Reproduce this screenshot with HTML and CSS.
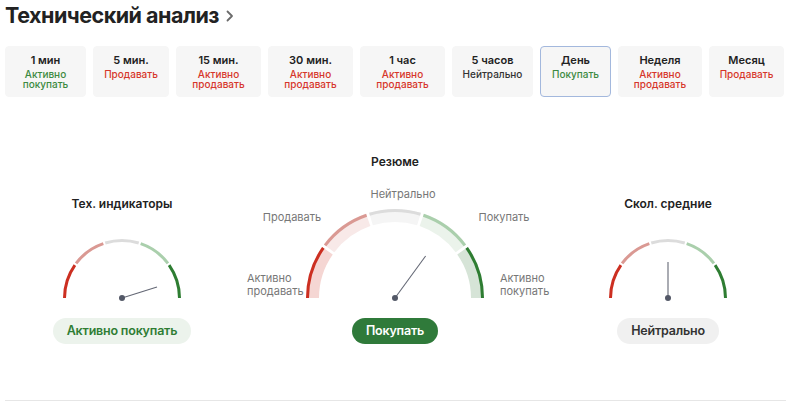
FILE: index.html
```html
<!DOCTYPE html>
<html lang="ru">
<head>
<meta charset="utf-8">
<title>Технический анализ</title>
<link rel="stylesheet" href="styles.css">
</head>
<body>
<div class="page">
  <h1 class="title">Технический анализ<svg class="chev" width="8" height="12" viewBox="0 0 8 12"><polyline points="1.5,1.5 6,6 1.5,10.5" fill="none" stroke="#6b6b6b" stroke-width="1.8" stroke-linecap="round" stroke-linejoin="round"/></svg></h1>

  <div class="tiles">
    <div class="tile"><div class="tf">1 мин</div><div class="ts buy">Активно покупать</div></div>
    <div class="tile"><div class="tf">5 мин.</div><div class="ts sell">Продавать</div></div>
    <div class="tile"><div class="tf">15 мин.</div><div class="ts sell">Активно продавать</div></div>
    <div class="tile"><div class="tf">30 мин.</div><div class="ts sell">Активно продавать</div></div>
    <div class="tile"><div class="tf">1 час</div><div class="ts sell">Активно продавать</div></div>
    <div class="tile"><div class="tf">5 часов</div><div class="ts neutral">Нейтрально</div></div>
    <div class="tile selected"><div class="tf">День</div><div class="ts buy">Покупать</div></div>
    <div class="tile"><div class="tf">Неделя</div><div class="ts sell">Активно продавать</div></div>
    <div class="tile"><div class="tf">Месяц</div><div class="ts sell">Продавать</div></div>
  </div>

  <div class="gauges">
    <div class="gcol">
      <div class="gtitle">Тех. индикаторы</div>
      <svg class="gsmall" width="130" height="64" viewBox="0 0 130 64">
        <path class="arc s1" d="M 7.5 60 A 57.5 57.5 0 0 1 122.5 60" pathLength="180" stroke-dasharray="35 999"/>
        <path class="arc s2" d="M 7.5 60 A 57.5 57.5 0 0 1 122.5 60" pathLength="180" stroke-dasharray="0 37 34 999"/>
        <path class="arc s3" d="M 7.5 60 A 57.5 57.5 0 0 1 122.5 60" pathLength="180" stroke-dasharray="0 73 34 999"/>
        <path class="arc s4" d="M 7.5 60 A 57.5 57.5 0 0 1 122.5 60" pathLength="180" stroke-dasharray="0 109 34 999"/>
        <path class="arc s5" d="M 7.5 60 A 57.5 57.5 0 0 1 122.5 60" pathLength="180" stroke-dasharray="0 145 35 999"/>
        <line class="needle" x1="65" y1="60" x2="100" y2="49"/>
        <circle class="pivot" cx="65" cy="60" r="3"/>
      </svg>
      <div class="pill pill-buy">Активно покупать</div>
    </div>

    <div class="gcol">
      <div class="gtitle">Резюме</div>
      <svg class="gbig" width="346" height="122" viewBox="0 0 346 122">
        <path class="band b1" d="M 90.5 118 A 82.5 82.5 0 0 1 255.5 118" pathLength="180" stroke-dasharray="35 999"/>
        <path class="band b2" d="M 90.5 118 A 82.5 82.5 0 0 1 255.5 118" pathLength="180" stroke-dasharray="0 37 34 999"/>
        <path class="band b3" d="M 90.5 118 A 82.5 82.5 0 0 1 255.5 118" pathLength="180" stroke-dasharray="0 73 34 999"/>
        <path class="band b4" d="M 90.5 118 A 82.5 82.5 0 0 1 255.5 118" pathLength="180" stroke-dasharray="0 109 34 999"/>
        <path class="band b5" d="M 90.5 118 A 82.5 82.5 0 0 1 255.5 118" pathLength="180" stroke-dasharray="0 145 35 999"/>
        <path class="arc s1" d="M 85.5 118 A 87.5 87.5 0 0 1 260.5 118" pathLength="180" stroke-dasharray="35 999"/>
        <path class="arc s2" d="M 85.5 118 A 87.5 87.5 0 0 1 260.5 118" pathLength="180" stroke-dasharray="0 37 34 999"/>
        <path class="arc s3" d="M 85.5 118 A 87.5 87.5 0 0 1 260.5 118" pathLength="180" stroke-dasharray="0 73 34 999"/>
        <path class="arc s4" d="M 85.5 118 A 87.5 87.5 0 0 1 260.5 118" pathLength="180" stroke-dasharray="0 109 34 999"/>
        <path class="arc s5" d="M 85.5 118 A 87.5 87.5 0 0 1 260.5 118" pathLength="180" stroke-dasharray="0 145 35 999"/>
        <text class="glabel" x="181" y="18" text-anchor="middle">Нейтрально</text>
        <text class="glabel" x="70" y="41" text-anchor="middle">Продавать</text>
        <text class="glabel" x="282" y="41" text-anchor="middle">Покупать</text>
        <text class="glabel" x="25" y="102">Активно</text>
        <text class="glabel" x="25" y="115">продавать</text>
        <text class="glabel" x="278" y="102">Активно</text>
        <text class="glabel" x="278" y="115">покупать</text>
        <line class="needle" x1="173" y1="118" x2="203.6" y2="76"/>
        <circle class="pivot" cx="173" cy="118" r="3"/>
      </svg>
      <div class="pill pill-solid">Покупать</div>
    </div>

    <div class="gcol">
      <div class="gtitle">Скол. средние</div>
      <svg class="gsmall" width="130" height="64" viewBox="0 0 130 64">
        <path class="arc s1" d="M 7.5 60 A 57.5 57.5 0 0 1 122.5 60" pathLength="180" stroke-dasharray="35 999"/>
        <path class="arc s2" d="M 7.5 60 A 57.5 57.5 0 0 1 122.5 60" pathLength="180" stroke-dasharray="0 37 34 999"/>
        <path class="arc s3" d="M 7.5 60 A 57.5 57.5 0 0 1 122.5 60" pathLength="180" stroke-dasharray="0 73 34 999"/>
        <path class="arc s4" d="M 7.5 60 A 57.5 57.5 0 0 1 122.5 60" pathLength="180" stroke-dasharray="0 109 34 999"/>
        <path class="arc s5" d="M 7.5 60 A 57.5 57.5 0 0 1 122.5 60" pathLength="180" stroke-dasharray="0 145 35 999"/>
        <line class="needle" x1="65" y1="60" x2="65" y2="24"/>
        <circle class="pivot" cx="65" cy="60" r="3"/>
      </svg>
      <div class="pill pill-neutral">Нейтрально</div>
    </div>
  </div>

  <div class="rule"></div>
</div>
</body>
</html>
```

FILE: styles.css
```css
* { box-sizing: border-box; }

html, body {
  margin: 0;
  padding: 0;
  background: #ffffff;
}

body {
  font-family: Inter, "Noto Sans", "DejaVu Sans", sans-serif;
  color: #1f1f1f;
}

.page {
  width: 800px;
  padding: 1px 15px 0 5px;
}

.title {
  margin: 0;
  font-size: 21.5px;
  line-height: 28px;
  font-weight: 700;
  color: #222222;
  letter-spacing: -0.5px;
  display: flex;
  align-items: center;
  gap: 7px;
}

.chev {
  display: block;
  margin-top: 1px;
}

.tiles {
  margin-top: 17px;
  display: grid;
  grid-template-columns: 81px 76px 85px 85px 85px 81px 71px 84px 75px;
  column-gap: 7px;
}

.tile {
  height: 51px;
  background: #f6f6f6;
  border: 1px solid #f6f6f6;
  border-radius: 4px;
  padding: 6px 6px 0;
  text-align: center;
}

.tile.selected {
  border-color: #a3b8dd;
}

.tf {
  font-size: 11px;
  line-height: 14px;
  font-weight: 600;
  color: #222222;
}

.ts {
  margin-top: 2px;
  font-size: 10px;
  line-height: 10px;
  font-weight: 500;
}

.buy { color: #3c8a41; }
.sell { color: #d6362b; }
.neutral { color: #333333; }

.gauges {
  margin-top: 57px;
  display: grid;
  grid-template-columns: 200px 346px 200px;
  justify-content: center;
  align-items: end;
}

.gcol {
  display: flex;
  flex-direction: column;
  align-items: center;
}

.gtitle {
  font-size: 12px;
  line-height: 16px;
  font-weight: 600;
  color: #222222;
}

.gsmall {
  display: block;
  margin-top: 26px;
}

.gbig {
  display: block;
  margin-top: 10px;
}

.arc, .band {
  fill: none;
  stroke-linecap: butt;
}

.arc { stroke-width: 3; }
.band { stroke-width: 13; }

.s1 { stroke: #cc2f21; }
.s2 { stroke: #da9993; }
.s3 { stroke: #dcdcdc; }
.s4 { stroke: #aacfac; }
.s5 { stroke: #2e7d32; }

.b1 { stroke: #f5d6d3; }
.b2 { stroke: #f8e9e8; }
.b3 { stroke: #f5f5f5; }
.b4 { stroke: #ebf3eb; }
.b5 { stroke: #d6e4d7; }

.needle {
  stroke: #646875;
  stroke-width: 1.1;
}

.pivot { fill: #535867; }

.glabel {
  font-family: Inter, "Noto Sans", sans-serif;
  font-size: 11px;
  fill: #777777;
}

.pill {
  margin-top: 16px;
  height: 26px;
  line-height: 26px;
  padding: 0 14px;
  border-radius: 13px;
  font-size: 12.5px;
  letter-spacing: -0.2px;
  font-weight: 600;
  white-space: nowrap;
}

.pill-buy {
  background: #ecf3ec;
  color: #2f7d34;
}

.pill-solid {
  background: #2f7a3a;
  color: #ffffff;
}

.pill-neutral {
  background: #f0f0f0;
  color: #333333;
}

.rule {
  margin-top: 56px;
  height: 0;
  border-top: 1px solid #e6e6e6;
  width: 781px;
}
```
